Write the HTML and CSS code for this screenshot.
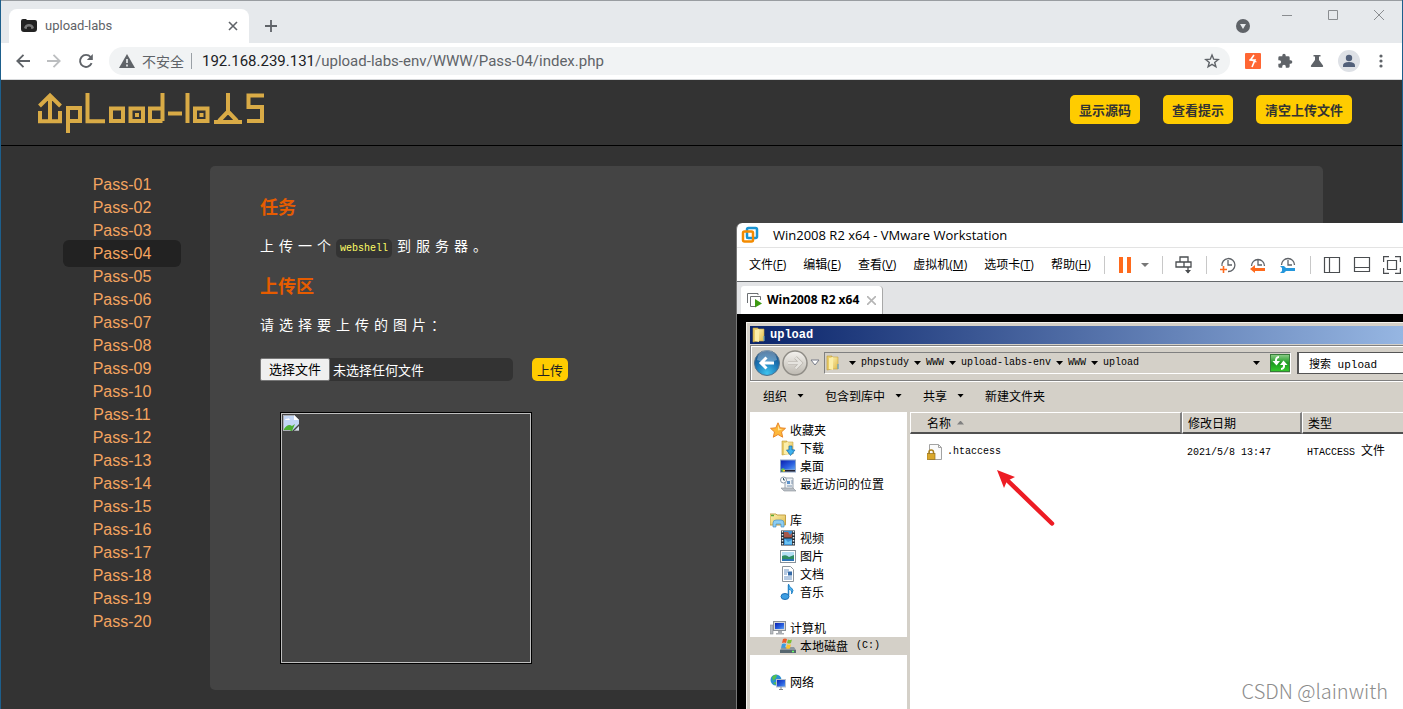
FILE: index.html
```html
<!DOCTYPE html>
<html lang="zh-CN">
<head>
<meta charset="utf-8">
<title>upload-labs</title>
<link rel="stylesheet" href="styles.css">
</head>
<body>
<svg class="defs" aria-hidden="true">
  <defs>
    <linearGradient id="folder" x1="0" y1="0" x2="1" y2="1"><stop offset="0" stop-color="#fdf3b4"/><stop offset="1" stop-color="#dfb94a"/></linearGradient>
    <linearGradient id="screen" x1="0" y1="0" x2="1" y2="1"><stop offset="0" stop-color="#0a1fb0"/><stop offset=".6" stop-color="#2b62e0"/><stop offset="1" stop-color="#5fa0f0"/></linearGradient>
    <radialGradient id="back" cx=".5" cy=".9" r=".9"><stop offset="0" stop-color="#3ec3ee"/><stop offset=".55" stop-color="#1b75b5"/><stop offset="1" stop-color="#17487c"/></radialGradient>
    <linearGradient id="fwd" x1="0" y1="0" x2="0" y2="1"><stop offset="0" stop-color="#f4f2ee"/><stop offset="1" stop-color="#bdb9b1"/></linearGradient>
    <linearGradient id="green" x1="0" y1="0" x2="0" y2="1"><stop offset="0" stop-color="#8fce8a"/><stop offset=".5" stop-color="#1c9a20"/><stop offset="1" stop-color="#35c92c"/></linearGradient>
    <symbol id="folder-open" viewBox="0 0 16 16"><path d="M2 1h5v13l-5 1z" fill="#e8cc6a" stroke="#c19c38" stroke-width=".6"/><path d="M6 2h7v12H6z" fill="url(#folder)" stroke="#c9a640" stroke-width=".6"/><path d="M4 3l4-1v13l-4-1z" fill="#fbeeaa"/><path d="M13 9v5" stroke="#4f9fd8"/></symbol>
  </defs>
</svg>
<div class="desktop">
  <div class="browser">
    <header class="tab-strip">
      <div class="tab">
        <svg width="16" height="16" viewBox="0 0 16 16"><path d="M0 3q0-2 2-2h3l1 1h8q2 0 2 2v7q0 3-3 3H3q-3 0-3-3z" fill="#222"/><path d="M3 10q1-4 5-4t5 4l-2 1q-3-2-6 0z" fill="#777"/><path d="M6 9q2-1 4 0v2H6z" fill="#222"/></svg>
        <span class="tab-title">upload-labs</span>
        <button class="icon-button" aria-label="关闭标签页"><svg width="10" height="10" viewBox="0 0 10 10"><path d="M1 1l8 8M9 1L1 9" stroke="#5f6368" stroke-width="1.6"/></svg></button>
      </div>
      <button class="icon-button new-tab" aria-label="新标签页"><svg width="12" height="12" viewBox="0 0 12 12"><path d="M6 0v12M0 6h12" stroke="#5f6368" stroke-width="1.8"/></svg></button>
      <button class="icon-button tab-search" aria-label="搜索标签页"><svg width="14" height="14" viewBox="0 0 14 14"><circle cx="7" cy="7" r="7" fill="#5f6368"/><path d="M4 5h6L7 10z" fill="#e6e9ec"/></svg></button>
      <div class="window-controls">
        <button class="icon-button" aria-label="最小化"><svg width="10" height="10" viewBox="0 0 10 10"><path d="M0 5.5h10" stroke="#8a8d90"/></svg></button>
        <button class="icon-button" aria-label="最大化"><svg width="10" height="10" viewBox="0 0 10 10"><path d="M.5.5h9v9h-9z" fill="none" stroke="#8a8d90"/></svg></button>
        <button class="icon-button" aria-label="关闭"><svg width="10" height="10" viewBox="0 0 10 10"><path d="M0 0l10 10M10 0L0 10" stroke="#8a8d90"/></svg></button>
      </div>
    </header>
    <div class="nav-bar">
      <div class="nav-buttons">
        <button class="icon-button" aria-label="后退"><svg width="14" height="14" viewBox="0 0 14 14"><path d="M14 7H1.5M7.500.8L1.300 7l6.200 6.200" fill="none" stroke="#5f6368" stroke-width="1.8"/></svg></button>
        <button class="icon-button" aria-label="前进"><svg width="14" height="14" viewBox="0 0 14 14"><path d="M0 7h12.500M6.500.8L12.700 7l-6.200 6.200" fill="none" stroke="#bcbec0" stroke-width="1.8"/></svg></button>
        <button class="icon-button" aria-label="重新加载"><svg width="16" height="16" viewBox="0 0 16 16"><path d="M13.600 10.200A6 6 0 1 1 12.600 4" fill="none" stroke="#5f6368" stroke-width="1.900"/><path d="M14.800 1v6H8.800z" fill="#5f6368"/></svg></button>
      </div>
      <div class="address">
        <svg width="16" height="14" viewBox="0 0 16 14"><path d="M8 0l8 14H0z" fill="#5f6368"/><path d="M8 5v4M8 10.500v2" stroke="#f1f3f4" stroke-width="1.600"/></svg>
        <span class="security">不安全</span>
        <span class="url"><b>192.168.239.131</b>/upload-labs-env/WWW/Pass-04/index.php</span>
        <button class="icon-button" aria-label="收藏"><svg width="16" height="16" viewBox="0 0 16 16"><path d="M8 2l1.700 4.200 4.500.3-3.500 2.900 1.200 4.400L8 11.400l-3.900 2.400 1.200-4.400L1.800 6.500l4.500-.3z" fill="none" stroke="#5f6368" stroke-width="1.400"/></svg></button>
      </div>
      <div class="extensions">
        <button class="icon-button" aria-label="Burp"><svg width="16" height="16" viewBox="0 0 16 16"><rect width="16" height="16" rx="1" fill="#ff6633"/><path d="M9 2L5.500 7H10L7 14" fill="none" stroke="#fff" stroke-width="1.600"/><path d="M4.500 6.500l7 2.500" stroke="#fff" stroke-width="1.300"/></svg></button>
        <button class="icon-button" aria-label="扩展程序"><svg width="16" height="16" viewBox="0 0 24 24"><path d="M20.500 11H19V7a2 2 0 0 0-2-2h-4V3.500a2.500 2.500 0 0 0-5 0V5H4a2 2 0 0 0-2 2v3.800h1.500a2.700 2.700 0 0 1 0 5.400H2V20a2 2 0 0 0 2 2h3.800v-1.500a2.700 2.700 0 0 1 5.400 0V22H17a2 2 0 0 0 2-2v-4h1.500a2.500 2.500 0 0 0 0-5z" fill="#5f6368"/></svg></button>
        <button class="icon-button" aria-label="实验"><svg width="16" height="16" viewBox="0 0 16 16"><path d="M4.500 2h7v1.500H10V7l4 5.500q.8 1.500-1 1.500H3q-1.800 0-1-1.500L6 7V3.500H4.500z" fill="#5f6368"/></svg></button>
        <button class="icon-button avatar" aria-label="用户"><svg width="22" height="22" viewBox="0 0 22 22"><circle cx="11" cy="11" r="11" fill="#dee1e6"/><circle cx="11" cy="8" r="3.200" fill="#52607a"/><path d="M5 17v-1.500q0-3.500 6-3.500t6 3.500V17z" fill="#52607a"/></svg></button>
        <button class="icon-button" aria-label="菜单"><svg width="16" height="16" viewBox="0 0 16 16" fill="#5f6368"><circle cx="8" cy="3" r="1.600"/><circle cx="8" cy="8" r="1.600"/><circle cx="8" cy="13" r="1.600"/></svg></button>
      </div>
    </div>

    <div class="page">
      <header class="page-header">
        <svg class="logo" width="228" height="42" viewBox="38 92 228 42" role="img" aria-label="upload-labs" fill="none" stroke="#d9ab46" stroke-width="4"><path d="M50 95v26M39.500 106L50 95.500 60.500 106M40 111v10.200h20V111M68 133v-25h12v13H68M87.500 93v28.200H105M111 108.500h12V121h-12zM130.500 108.500h12.500V121h-12.500zM162.500 93v28M162.500 108.500H150V121h12.500M168 113.500h14M187.500 93v30M195 108.500h12.500V121H195zM228 93v18M219 121l9-9.500 9 9.500M214 122h28M264 95.500h-15.500V107H262v14h-15"/><path d="M135 113h4v4h-4zM199.500 113h4v4h-4z" fill="#d9ab46" stroke="none"/></svg>
        <div class="header-actions">
          <button class="action">显示源码</button>
          <button class="action">查看提示</button>
          <button class="action">清空上传文件</button>
        </div>
      </header>
      <div class="page-body">
        <nav class="levels">
          <a href="#">Pass-01</a><a href="#">Pass-02</a><a href="#">Pass-03</a><a href="#" class="current">Pass-04</a><a href="#">Pass-05</a><a href="#">Pass-06</a><a href="#">Pass-07</a><a href="#">Pass-08</a><a href="#">Pass-09</a><a href="#">Pass-10</a><a href="#">Pass-11</a><a href="#">Pass-12</a><a href="#">Pass-13</a><a href="#">Pass-14</a><a href="#">Pass-15</a><a href="#">Pass-16</a><a href="#">Pass-17</a><a href="#">Pass-18</a><a href="#">Pass-19</a><a href="#">Pass-20</a>
        </nav>
        <main class="panel">
          <h3>任务</h3>
          <p>上传一个<code>webshell</code>到服务器。</p>
          <h3>上传区</h3>
          <p>请选择要上传的图片：</p>
          <form class="upload-form">
            <label class="file-picker">
              <span class="file-button">选择文件</span>
              <span>未选择任何文件</span>
              <input type="file" class="file-input">
            </label>
            <button type="button" class="submit">上传</button>
          </form>
          <div class="preview">
            <svg width="16" height="16" viewBox="0 0 16 16"><path d="M0 0h11l5 5v4L9 16H0z" fill="#c3d6f5"/><path d="M.5.5H11l4.500 4.500" fill="none" stroke="#a9adb3"/><path d="M.5 0v16" stroke="#a9adb3"/><path d="M2 5q1-2 2-1 2-2 3 1z" fill="#fff"/><path d="M1 14q4-6 8-3l3-2-3 7H1z" fill="#4caf32"/><path d="M11 0v5h5z" fill="#fff"/><path d="M16 11v5h-5z" fill="#d4dff0"/><path d="M.5 15.500h7M12 15.500h4" stroke="#a9adb3"/></svg>
          </div>
        </main>
      </div>
    </div>
  </div>

  <section class="vmware">
    <div class="vm-title">
      <svg width="18" height="18" viewBox="0 0 18 18" fill="none" stroke-width="2.500"><rect x="6" y="2" width="10" height="10" rx="1.500" stroke="#1a94d2"/><rect x="2" y="5.500" width="10" height="10" rx="1.500" stroke="#f38b00"/><path d="M6 8v4h5" stroke="#1a94d2" stroke-width="1.500"/></svg>
      <span>Win2008 R2 x64 - VMware Workstation</span>
    </div>
    <div class="vm-menu">
      <button>文件(<u>F</u>)</button><button>编辑(<u>E</u>)</button><button>查看(<u>V</u>)</button><button>虚拟机(<u>M</u>)</button><button>选项卡(<u>T</u>)</button><button>帮助(<u>H</u>)</button>
      <div class="vm-tools">
        <button aria-label="暂停"><svg width="32" height="18" viewBox="0 0 32 18"><path d="M2 1h4v16H2zM10 1h4v16h-4z" fill="#ff6a1c"/><path d="M24 7h8l-4 4z" fill="#777"/></svg></button>
        <button aria-label="发送按键"><svg width="18" height="18" viewBox="0 0 18 18" fill="none" stroke="#4a4d50" stroke-width="1.300"><path d="M5 6V1h8v5M1 6h15v5H1zM9 6v5M13 11v6"/><path d="M10 14h6l-3 3.500z" fill="#4a4d50" stroke="none"/></svg></button>
        <div class="tool-group">
          <button aria-label="拍摄快照"><svg width="18" height="18" viewBox="0 0 18 18" fill="none" stroke="#5f6368" stroke-width="1.300"><path d="M3 10A6.500 6.500 0 1 1 9 15.500M9 4v5h4"/><path d="M4.500 10v7M1 13.500h7" stroke="#ff6a1c" stroke-width="1.600"/></svg></button>
          <button aria-label="恢复快照"><svg width="18" height="18" viewBox="0 0 18 18" fill="none" stroke="#5f6368" stroke-width="1.300"><path d="M2.500 10a6.500 6.500 0 1 1 13 0M9 4v5h4"/><path d="M1 13l5-4v3h10v3H6v2z" fill="#ff6a1c" stroke="none"/></svg></button>
          <button aria-label="管理快照"><svg width="18" height="18" viewBox="0 0 18 18" fill="none" stroke="#5f6368" stroke-width="1.300"><path d="M2.500 9a6.500 6.500 0 1 1 13 0M9 4v5h4"/><path d="M1 10h4l2 2h9v3H7l-2 2H1l2-2v-3z" fill="#2497dc" stroke="none"/></svg></button>
        </div>
        <div class="tool-group">
          <button aria-label="侧栏"><svg width="18" height="18" viewBox="0 0 18 18" fill="none" stroke="#4a4d50" stroke-width="1.200"><path d="M1.500 1.500h15v15h-15zM6.500 1.500v15"/></svg></button>
          <button aria-label="底栏"><svg width="18" height="18" viewBox="0 0 18 18" fill="none" stroke="#4a4d50" stroke-width="1.200"><path d="M1.500 1.500h15v14h-15zM1.500 11.500h15"/></svg></button>
          <button aria-label="全屏"><svg width="18" height="18" viewBox="0 0 18 18" fill="none" stroke="#4a4d50" stroke-width="1.200"><path d="M.6 6V.6H6M12 .6h5.400V6M.6 12v5.400H6M12 17.400h5.400V12M4.500 4.500h9v9h-9z"/></svg></button>
        </div>
      </div>
    </div>
    <div class="vm-tabs">
      <div class="vm-tab">
        <svg width="16" height="16" viewBox="0 0 16 16" fill="none" stroke="#6d7073"><path d="M.5 11V1.500H11V3M9 14.500H3.500v-10h10V8"/><path d="M8 7l7 4.500-7 4z" fill="#3d9a12" stroke="none"/></svg>
        <b>Win2008 R2 x64</b>
        <button class="icon-button" aria-label="关闭"><svg width="9" height="9" viewBox="0 0 9 9"><path d="M0 0l9 9M9 0L0 9" stroke="#b5b5b5" stroke-width="1.600"/></svg></button>
      </div>
    </div>
    <div class="vm-screen">
      <div class="explorer">
        <div class="ex-title"><svg width="16" height="16"><use href="#folder-open"/></svg><b>upload</b></div>
        <div class="ex-nav">
          <button class="round" aria-label="返回"><svg width="26" height="26" viewBox="0 0 26 26"><circle cx="13" cy="13" r="12.500" fill="url(#back)" stroke="#51718c"/><path d="M3 10a10 10 0 0 1 20 0q-10 4-20 0z" fill="#fff" opacity=".3"/><path d="M20 13H8M12.500 7.500L7 13l5.500 5.500" fill="none" stroke="#fff" stroke-width="3"/></svg></button>
          <button class="round" aria-label="前进"><svg width="26" height="26" viewBox="0 0 26 26"><circle cx="13" cy="13" r="12" fill="url(#fwd)" stroke="#8f8c86" stroke-width="1.500"/><path d="M6 13h12M13.500 7.500L19 13l-5.500 5.500" fill="none" stroke="#b5b1aa" stroke-width="3.500"/><path d="M6 13h12M13.500 7.500L19 13l-5.500 5.500" fill="none" stroke="#e6e4df" stroke-width="2.400"/></svg></button>
          <button aria-label="历史"><svg width="10" height="8" viewBox="0 0 10 8"><path d="M1 1h8L5 6z" fill="#fff" stroke="#777b88"/></svg></button>
          <div class="crumbs">
            <svg width="16" height="16"><use href="#folder-open"/></svg>
            <span class="caret first"></span><span>phpstudy</span><span class="caret"></span><span>WWW</span><span class="caret"></span><span>upload-labs-env</span><span class="caret"></span><span>WWW</span><span class="caret"></span><span>upload</span>
            <span class="caret end"></span>
            <button aria-label="刷新"><svg width="20" height="18" viewBox="0 0 20 18"><rect x=".5" y=".5" width="19" height="17" fill="url(#green)" stroke="#387b3a"/><path d="M9 3Q5.500 3 6 8" fill="none" stroke="#fff" stroke-width="2"/><path d="M2.500 7h7.500L6.500 11.500z" fill="#fff"/><path d="M11 15q3.500 0 3-5" fill="none" stroke="#fff" stroke-width="2"/><path d="M10 11h7.500L13.500 6.500z" fill="#fff"/></svg></button>
          </div>
          <input class="search" type="text" aria-label="搜索" value="搜索 upload">
        </div>
        <div class="ex-tools">
          <button>组织<span class="caret"></span></button><button>包含到库中<span class="caret"></span></button><button>共享<span class="caret"></span></button><button>新建文件夹</button>
        </div>
        <div class="ex-content">
          <nav class="tree">
            <div class="group">
              <a href="#"><svg width="16" height="16" viewBox="0 0 16 16"><path d="M8 .8l2.200 5 5.300.5-4 3.600 1.200 5.300L8 12.500l-4.700 2.700 1.200-5.300-4-3.600 5.300-.5z" fill="#fdb83a" stroke="#e8862a"/><path d="M8 3l1.500 4 3 .5-4.500 1z" fill="#ffe9a0"/></svg>收藏夹</a>
              <a href="#" class="child"><svg width="16" height="16" viewBox="0 0 16 16"><use href="#folder-open" width="16" height="16"/><path d="M9 6h3v4h3l-4.500 5.500L6.500 10H9z" fill="#3db2ee" stroke="#1b6cad" stroke-width=".7"/></svg>下载</a>
              <a href="#" class="child"><svg width="16" height="16" viewBox="0 0 16 16"><rect y="1.500" width="16" height="13" fill="#8ba4c8"/><rect x="1" y="2.500" width="14" height="9" fill="url(#screen)"/><path d="M1 12h14v1.500H1z" fill="#223"/><circle cx="3" cy="12" r="1.800" fill="#63c552"/><path d="M3 12h2v1.500H3z" fill="#fc3"/></svg>桌面</a>
              <a href="#" class="child"><svg width="16" height="16" viewBox="0 0 16 16"><path d="M5 2h8v12H5z" fill="#eef2f6" stroke="#98a2ad"/><path d="M7 5h3v3H7z" fill="#5e93ca"/><path d="M11 5h2M11 7h2M7 10h5" stroke="#7e94ad"/><path d="M1 12h12l3 3H4z" fill="#b9bfc6" stroke="#8b9198" stroke-width=".6"/><circle cx="3.500" cy="4" r="3" fill="#fff" stroke="#8a98aa"/><path d="M3.500 2v2h1.500" fill="none" stroke="#356"/></svg>最近访问的位置</a>
            </div>
            <div class="group">
              <a href="#"><svg width="16" height="16" viewBox="0 0 16 16"><path d="M0 2h6l1 1h8.500v10H0z" fill="url(#folder)" stroke="#c3a044"/><path d="M1 3.500h3" stroke="#58a834" stroke-width="1.500"/><path d="M3 15v-4q0-3 3-3h5q3 0 3 3v4h-3v-3H6v3z" fill="#8ccdf2" stroke="#4a90c4" stroke-width=".7"/></svg>库</a>
              <a href="#" class="child"><svg width="16" height="16" viewBox="0 0 16 16"><rect x="1" y=".5" width="14" height="15" fill="#26303a"/><rect x="4" y="1" width="8" height="14" fill="#3c93d6"/><path d="M4 2h4l2 3 2-2v5H4z" fill="#a8584a"/><path d="M5 9l3 3 4-2v4H5z" fill="#6bc4f4"/><path d="M2.500 1v14M13.500 1v14" stroke="#e8eef2" stroke-dasharray="1.500 1.500" stroke-width="1.500"/><path d="M4 8h8" stroke="#222"/></svg>视频</a>
              <a href="#" class="child"><svg width="16" height="16" viewBox="0 0 16 16"><rect x=".5" y="2.500" width="15" height="12" fill="#fff" stroke="#89939c"/><rect x="2" y="4" width="12" height="9" fill="#b4def4"/><path d="M2 8q4-2 7 1l5-2v6H2z" fill="#2e8d63"/><path d="M2 11h12v2H2z" fill="#2a72b4"/></svg>图片</a>
              <a href="#" class="child"><svg width="16" height="16" viewBox="0 0 16 16"><path d="M2.500.5h8l3 3v12h-11z" fill="#fff" stroke="#8c949c"/><path d="M4 4h5M4 6h4M4 8h3M4 11h8M4 13h8" stroke="#6a93c4"/><path d="M8 5.500h4v4H8z" fill="#346aa8"/></svg>文档</a>
              <a href="#" class="child"><svg width="16" height="16" viewBox="0 0 16 16"><path d="M8.500 1v10.500" stroke="#2785c8" stroke-width="1.500"/><ellipse cx="5" cy="12.500" rx="4" ry="3" fill="#3d9ee2" stroke="#1e6fb4"/><path d="M8.500 0q.5 3 3 4 3 2 0 6 1-4-3-5z" fill="#4db3f0" stroke="#2785c8"/></svg>音乐</a>
            </div>
            <div class="group">
              <a href="#"><svg width="16" height="16" viewBox="0 0 16 16"><rect x=".5" y="5" width="2.500" height="9" fill="#b9bdc2" stroke="#888c91" stroke-width=".6"/><rect x="3.500" y="1.500" width="12" height="9" fill="#d5d8dc" stroke="#8b9096"/><rect x="5" y="3" width="9" height="6" fill="url(#screen)"/><path d="M8 11h4v2h2v1.500H6V13h2z" fill="#a9adb2"/></svg>计算机</a>
              <a href="#" class="child selected"><svg width="16" height="16" viewBox="0 0 16 16"><path d="M2 9h12l2 3v3H0v-3z" fill="#8c979f"/><path d="M0 12h16v3H0z" fill="#56666e"/><path d="M12 13.500h2" stroke="#6f6" stroke-width="1.500"/><path d="M3 1q2-1 4 0L6 5Q4 4 2 5z" fill="#ec5a28"/><path d="M8 1.500q2 1 4 0L11 5q-2 1-4 0z" fill="#7cbf33"/><path d="M2 6q2-1 4 0l-1 4q-2-1-4 0z" fill="#3b9be0"/><path d="M7 6.200q2 1 4 0l-1 4q-2 1-4 0z" fill="#fcc32c"/></svg>本地磁盘<span class="mono drive">(C:)</span></a>
            </div>
            <div class="group">
              <a href="#"><svg width="16" height="16" viewBox="0 0 16 16"><circle cx="6" cy="6" r="5.500" fill="#2b8fd4"/><path d="M2 3q3-3 5-2l-1 3-3 3zM8 5l3 1-2 3zM3 9l3-1v3z" fill="#55c24c"/><rect x="6.500" y="5.500" width="9" height="7.500" fill="url(#screen)" stroke="#b9c2cc"/><path d="M9 15.500h4M11 13v2" stroke="#7f868d"/></svg>网络</a>
            </div>
          </nav>
          <table class="files">
            <thead><tr><th class="col-name">名称<span class="sort"></span></th><th class="col-date">修改日期</th><th>类型</th></tr></thead>
            <tbody><tr>
              <td><span class="file"><svg width="16" height="16" viewBox="0 0 16 16"><path d="M2.500.5h9l3 3v12h-12z" fill="#fafafa" stroke="#a2a2a2"/><path d="M11.500.5v3h3" fill="none" stroke="#a2a2a2"/><path d="M2 10V8q0-2 2.200-2T6.500 8v2" fill="none" stroke="#a97f1c" stroke-width="1.500"/><rect x="0" y="9.500" width="8" height="6" fill="#d9a72c" stroke="#94701a" stroke-width=".7"/></svg><span class="mono">.htaccess</span></span></td>
              <td><span class="mono">2021/5/8 13:47</span></td>
              <td><span class="mono">HTACCESS </span>文件</td>
            </tr></tbody>
          </table>
        </div>
      </div>
    </div>
  </section>
  <svg class="pointer" width="60" height="58" viewBox="996 468 60 58" aria-hidden="true"><path d="M1006 479l46 44.500" stroke="#ed1c24" stroke-width="4.500" stroke-linecap="round"/><path d="M997 470l18 7-8 4-3 7z" fill="#ed1c24"/></svg>
  <div class="watermark">CSDN @lainwith</div>
</div>
</body>
</html>
```
FILE: styles.css
```css
* { box-sizing: border-box; }
body { margin: 0; font-family: "Liberation Sans", "Noto Sans CJK SC", sans-serif; }
button { background: none; border: 0; padding: 0; margin: 0; font: inherit; color: inherit; }
svg { display: block; flex: none; }
a { color: inherit; text-decoration: none; }
.defs { position: absolute; width: 0; height: 0; }
.desktop { position: relative; height: 100vh; overflow: hidden; background: #1d5f8c; padding: 0 1px; }
.icon-button { display: flex; align-items: center; justify-content: center; }

/* Browser chrome */
.browser { display: flex; flex-direction: column; height: 100%; border-top: 1px solid #999da1; background: #333; }
.tab-strip { display: flex; align-items: center; height: 42px; padding-left: 8px; background: #e6e9ec; }
.tab { display: flex; align-items: center; gap: 8px; width: 240px; height: 34px; margin-top: 8px; padding: 0 11px 0 12px; background: #fff; border-radius: 8px 8px 0 0; }
.tab-title { flex: 1; font: 13px/18px Roboto, sans-serif; color: #5f6368; }
.new-tab { margin: 8px 0 0 16px; }
.tab-search { margin: 8px 32px 0 auto; }
.window-controls { display: flex; gap: 36px; padding-right: 18px; align-self: flex-start; margin-top: 9px; }
.nav-bar { display: flex; align-items: center; height: 37px; background: #fff; border-bottom: 1px solid #d6d8da; }
.nav-buttons { display: flex; align-items: center; gap: 17px; width: 108px; padding-left: 15px; }
.address { flex: 1; display: flex; align-items: center; height: 28px; padding: 0 10px; border-radius: 14px; background: #f1f3f4; }
.security { margin-left: 7px; padding-right: 7px; border-right: 1px solid #9aa0a6; font: 14px/16px "Noto Sans CJK SC", sans-serif; color: #5f6368; }
.url { flex: 1; margin-left: 10px; font: 15px/22px Roboto, sans-serif; color: #5f6368; }
.url b { font-weight: 400; color: #202124; }
.extensions { display: flex; align-items: center; gap: 16px; padding: 0 13px 0 15px; }
.avatar { margin: 0 -3px; }

/* Site */
.page { flex: 1; display: flex; flex-direction: column; }
.page-header { display: flex; justify-content: space-between; padding: 12px 50px 0 37px; height: 66px; border-bottom: 1px solid #000; }
.header-actions { display: flex; gap: 23px; padding-top: 3px; }
.action { height: 29px; padding: 0 9px; border-radius: 5px; background: #fc0; color: #333; font: bold 13px/20px "Noto Sans CJK SC", sans-serif; }
.page-body { flex: 1; display: flex; align-items: flex-start; padding: 20px 79px 0 62px; }
.levels { display: flex; flex-direction: column; width: 118px; margin-right: 29px; padding-top: 5px; font-size: 16px; line-height: 27px; text-align: center; color: #f4a460; }
.levels a { height: 27px; margin-bottom: -4px; border-radius: 6px; }
.levels .current { background: #222; }
.panel { flex: 1; min-height: 524px; padding: 27px 50px 26px; border-radius: 5px; background: #444; color: #fff; font-family: "Noto Sans CJK SC", sans-serif; }
.panel h3 { margin: 0; font-size: 18px; line-height: 26px; color: #e65c00; }
.panel p { margin: 13px 0 14px; font-size: 14px; line-height: 26px; letter-spacing: 5px; }
.panel code { margin-right: 5px; padding: 4px; border-radius: 5px; background: #333; color: #ff6; font: 10px/12px "Liberation Mono", monospace; letter-spacing: 0; }
.upload-form { display: flex; align-items: center; gap: 19px; padding-top: 7px; font-size: 13px; line-height: 20px; }
.file-picker { position: relative; display: flex; align-items: center; gap: 3px; width: 253px; height: 23px; border-radius: 5px; background: #333; }
.file-button { height: 23px; padding: 0 8px; border: 1px solid #767676; border-radius: 2px; background: #efefef; color: #000; }
.file-input { position: absolute; inset: 0; width: 100%; opacity: 0; }
.submit { height: 23px; padding: 0 5px; border-radius: 5px; background: #fc0; color: #222; }
.preview { width: 252px; height: 252px; margin: 31px 0 0 20px; padding: 1px; border: 1px solid #000; outline: 1px solid #c0c0c0; outline-offset: -2px; }
.preview svg { margin: 1px; }

/* VMware window */
.vmware { position: absolute; left: 736px; top: 223px; right: 0; bottom: 0; display: flex; flex-direction: column; overflow: hidden; border-left: 1px solid #777; border-radius: 6px 0 0 0; background: #fff; color: #000; white-space: nowrap; }
.vm-title { display: flex; align-items: center; gap: 14px; height: 25px; padding-left: 4px; border-bottom: 1px solid #e3e3e3; font: 13px/18px "Open Sans", sans-serif; }
.vm-menu { display: flex; align-items: center; gap: 17px; height: 34px; padding-left: 12px; border-bottom: 1px solid #66696c; font: 12px/18px "Open Sans", "Noto Sans CJK SC", sans-serif; }
.vm-tools { display: flex; align-items: center; margin-left: -4px; }
.vm-tools > * { padding: 0 13px 0 12px; border-left: 1px solid #c8c8c8; }
.tool-group { display: flex; gap: 12px; }
.vm-tabs { display: flex; align-items: flex-end; height: 32px; padding-left: 4px; background: #e3e4e6; }
.vm-tab { display: flex; align-items: center; gap: 4px; height: 28px; padding: 0 6px; border-right: 1px solid #a8a8a8; border-radius: 3px 4px 0 0; background: #fff; font: 12px/18px "Open Sans", sans-serif; }
.vm-tab .icon-button { margin-left: 4px; }
.vm-screen { flex: 1; display: flex; padding: 8px 0 0 9px; background: #000; }

/* Windows Explorer */
.explorer { flex: 1; display: flex; flex-direction: column; padding: 3px 0 0 3px; border: solid #f4f2ee; border-width: 1px 0 0 1px; background: #d4d0c8; font: 12px/18px "Noto Sans CJK SC", sans-serif; }
.ex-title { display: flex; align-items: center; gap: 3px; height: 18px; padding-left: 1px; color: #fff; background: linear-gradient(90deg, #0a246a, #96b6e2); font: 12px/18px "Liberation Mono", monospace; }
.ex-nav { display: flex; align-items: center; height: 36px; margin-top: 1px; padding: 0 0 0 3px; border: solid #808080; border-width: 1px 0 1px 1px; box-shadow: inset 1px 1px #fff, 0 1px #fff; }
.round { margin-right: 2px; }
.crumbs { flex: 1; display: flex; align-items: center; gap: 5px; height: 22px; margin: 0 6px 0 4px; border: 1px solid #808080; border-right-color: #fff; border-bottom-color: #fff; font: 10px/16px "Liberation Mono", monospace; }
.caret { width: 7px; height: 4px; background: #000; clip-path: polygon(0 0, 100% 0, 50% 100%); }
.caret.first { margin-left: 3px; }
.caret.end { margin: 0 5px 0 auto; }
.search { width: 106px; height: 22px; margin: 0; padding: 0 10px; border: 1px solid #555; border-width: 1px 0 1px 2px; border-radius: 0; background: #fff; font: 11px/18px "Liberation Mono", "Noto Sans CJK SC", monospace; color: #000; }
.ex-tools { display: flex; align-items: center; gap: 21px; height: 31px; padding: 0 0 2px 13px; }
.ex-tools button { display: flex; align-items: center; gap: 10px; }
.ex-content { flex: 1; display: flex; }
.tree { width: 157px; padding-top: 9px; background: #fff; }
.group { margin-bottom: 18px; }
.tree a { display: flex; align-items: center; gap: 4px; height: 18px; padding-left: 20px; }
.tree .child { padding-left: 30px; }
.tree .selected { background: #d4d0c8; }
.mono { font: 10px/18px "Liberation Mono", monospace; white-space: pre; }
.drive { margin-left: 4px; }
.files { flex: 1; align-self: stretch; margin-left: 3px; border-collapse: separate; border-spacing: 0; table-layout: fixed; display: table; background: #fff; }
.files th { padding: 0 5px; border: 1px solid #fff; border-right: 2px solid #808080; border-bottom: 2px solid #505050; background: #d4d0c8; font-weight: 400; text-align: left; height: 22px; line-height: 18px; }
.files .col-name { width: 272px; padding-left: 16px; }
.files .col-date { width: 120px; }
.files th:last-child { border-right: 0; }
.files td { padding: 7px 5px; vertical-align: top; }
.files td:first-child { padding: 9px 0 0 17px; }
.file { display: flex; align-items: center; gap: 4px; }
.sort { display: inline-block; width: 7px; height: 4px; margin: 0 0 3px 6px; background: #808080; clip-path: polygon(50% 0, 100% 100%, 0 100%); }

/* Annotations */
.pointer { position: absolute; left: 996px; top: 468px; }
.watermark { position: absolute; right: 15px; bottom: 4px; font: 300 20px/28px "Noto Sans CJK SC", sans-serif; color: #8c8c8c; }
```
